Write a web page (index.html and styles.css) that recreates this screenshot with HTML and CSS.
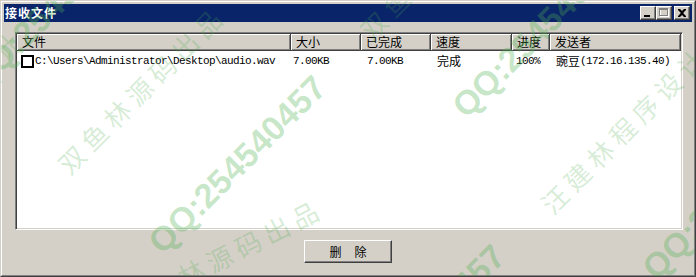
FILE: index.html
```html
<!DOCTYPE html>
<html lang="zh-CN">
<head>
<meta charset="utf-8">
<title>接收文件</title>
<link rel="stylesheet" href="styles.css">
</head>
<body>
<div class="window">
  <div class="window-inner">
    <div class="titlebar">
      <span class="title">接收文件</span>
      <div class="caption-buttons">
        <span class="cbtn">
          <svg width="14" height="12" viewBox="0 0 14 12"><rect x="3" y="8" width="6" height="2" fill="#000"/></svg>
        </span>
        <span class="cbtn">
          <svg width="14" height="12" viewBox="0 0 14 12">
            <rect x="3.5" y="2.5" width="8" height="7" fill="none" stroke="#fff"/>
            <rect x="3" y="2" width="8" height="1" fill="#fff"/>
            <rect x="2.5" y="1.5" width="8" height="7" fill="none" stroke="#808080"/>
            <rect x="2" y="1" width="9" height="2" fill="#808080"/>
          </svg>
        </span>
        <span class="cbtn cbtn-close">
          <svg width="14" height="12" viewBox="0 0 14 12"><path d="M3 2h2l2 2 2-2h2v1l-2.5 2.5v1L11 9v1H9L7 8 5 10H3V9l2.5-2.5v-1L3 3z" fill="#000"/></svg>
        </span>
      </div>
    </div>

    <div class="listview">
      <div class="lv-header">
        <div class="hcell">文件</div>
        <div class="hcell">大小</div>
        <div class="hcell">已完成</div>
        <div class="hcell">速度</div>
        <div class="hcell">进度</div>
        <div class="hcell">发送者</div>
      </div>
      <div class="lv-row">
        <div class="cell c-file"><span class="checkbox"></span><span class="mono">C:\Users\Administrator\Desktop\audio.wav</span></div>
        <div class="cell c-size"><span class="mono">7.00KB</span></div>
        <div class="cell c-done"><span class="mono">7.00KB</span></div>
        <div class="cell c-speed">完成</div>
        <div class="cell c-prog"><span class="mono">100%</span></div>
        <div class="cell c-from">豌豆<span class="mono">(172.16.135.40)</span></div>
      </div>
    </div>

    <div class="actions">
      <button class="btn" type="button"><span>删</span><span>除</span></button>
    </div>
  </div>

  <div class="watermarks" aria-hidden="true">
    <span class="wm wm-cn" style="left:52px;top:158px">双鱼林源码出品</span>
    <span class="wm wm-cn" style="left:354px;top:24px">双鱼林源码出品</span>
    <span class="wm wm-cn wm-flat" style="left:115px;top:295px">双鱼林源码出品</span>
    <span class="wm wm-cn" style="left:535px;top:198px">汪建林程序设计</span>
    <span class="wm wm-cn" style="left:-149px;top:181px">汪建林程序设计</span>
    <span class="wm wm-qq" style="left:141px;top:234px">QQ:254540457</span>
    <span class="wm wm-qq" style="left:445px;top:98px">QQ:254540457</span>
    <span class="wm wm-qq" style="left:320px;top:403px">QQ:254540457</span>
    <span class="wm wm-qq" style="left:635px;top:260px">QQ:254540457</span>
    <span class="wm wm-qq" style="left:-40px;top:72px">QQ:254540457</span>
  </div>
</div>
</body>
</html>
```

FILE: styles.css
```css
* {
  box-sizing: border-box;
}

html,
body {
  margin: 0;
  padding: 0;
}

body {
  width: 696px;
  height: 277px;
  overflow: hidden;
  background: #d4d0c8;
  font-family: "Noto Sans CJK SC", "Liberation Sans", sans-serif;
  font-size: 12px;
  color: #000;
}

.window {
  position: relative;
  width: 696px;
  height: 277px;
  background: #d4d0c8;
  border: 1px solid;
  border-color: #d4d0c8 #404040 #404040 #d4d0c8;
  display: flex;
  flex-direction: column;
  overflow: hidden;
}

.window-inner {
  flex: 1;
  border: 1px solid;
  border-color: #fff #808080 #808080 #fff;
  padding: 2px;
  display: flex;
  flex-direction: column;
}

.titlebar {
  height: 18px;
  background: #0a246a;
  display: flex;
  align-items: center;
  padding-left: 1px;
  padding-right: 2px;
}

.title {
  color: #fff;
  font-weight: bold;
  font-size: 12px;
  letter-spacing: 1px;
  line-height: 18px;
}

.caption-buttons {
  margin-left: auto;
  display: flex;
  align-items: center;
}

.cbtn {
  width: 16px;
  height: 14px;
  background: #d4d0c8;
  border: 1px solid;
  border-color: #fff #404040 #404040 #fff;
  box-shadow: inset -1px -1px #808080;
  display: flex;
  align-items: flex-start;
  justify-content: flex-start;
}

.cbtn svg {
  display: block;
}

.cbtn-close {
  margin-left: 2px;
}

.listview {
  margin: 10px 9px 0 11px;
  height: 198px;
  background: #fff;
  border: 1px solid;
  border-color: #808080 #fff #fff #808080;
  box-shadow: inset 1px 1px #404040, inset -1px -1px #d4d0c8;
  padding: 1px;
  display: flex;
  flex-direction: column;
}

.lv-header,
.lv-row {
  display: grid;
  grid-template-columns: 274px 70px 70px 81px 38px 1fr;
}

.lv-header {
  height: 17px;
}

.hcell {
  background: #d4d0c8;
  border-right: 1px solid #404040;
  border-bottom: 1px solid #404040;
  box-shadow: inset 1px 1px #fff, inset -1px -1px #808080;
  padding-left: 5px;
  line-height: 15px;
  white-space: nowrap;
  overflow: hidden;
}

.lv-row {
  margin-top: 2px;
  height: 16px;
  line-height: 16px;
  white-space: nowrap;
}

.cell {
  display: flex;
  align-items: center;
  overflow: hidden;
  padding-left: 6px;
}

.mono {
  font-family: "Liberation Mono", monospace;
  font-size: 11px;
  letter-spacing: -0.6px;
}

.c-file {
  padding-left: 4px;
}

.c-size {
  padding-left: 2px;
}

.c-prog {
  padding-left: 4px;
}

.checkbox {
  width: 13px;
  height: 13px;
  border: 2px solid #000;
  background: #fff;
  margin-right: 1px;
  flex: none;
}

.actions {
  margin-top: 10px;
  display: flex;
  justify-content: center;
}

.btn {
  width: 88px;
  height: 23px;
  padding: 0;
  margin: 0;
  background: #d4d0c8;
  border: 1px solid;
  border-color: #fff #404040 #404040 #fff;
  box-shadow: inset -1px -1px #808080;
  font-family: "Noto Sans CJK SC", sans-serif;
  font-size: 12px;
  color: #000;
  display: flex;
  align-items: center;
  justify-content: center;
  gap: 13px;
}

.watermarks {
  position: absolute;
  inset: 0;
  pointer-events: none;
  overflow: hidden;
}

.wm {
  position: absolute;
  white-space: nowrap;
  line-height: 1;
  transform-origin: 0 0;
  transform: rotate(-45deg);
}

.wm-flat {
  transform: rotate(-27deg);
  letter-spacing: 4px;
}

.wm-cn {
  font-family: "Noto Sans CJK SC", sans-serif;
  font-size: 26px;
  letter-spacing: 6px;
  color: rgba(70, 170, 70, 0.22);
}

.wm-qq {
  font-family: "Liberation Sans", sans-serif;
  font-weight: bold;
  font-size: 34px;
  color: rgba(80, 175, 80, 0.32);
}
```
